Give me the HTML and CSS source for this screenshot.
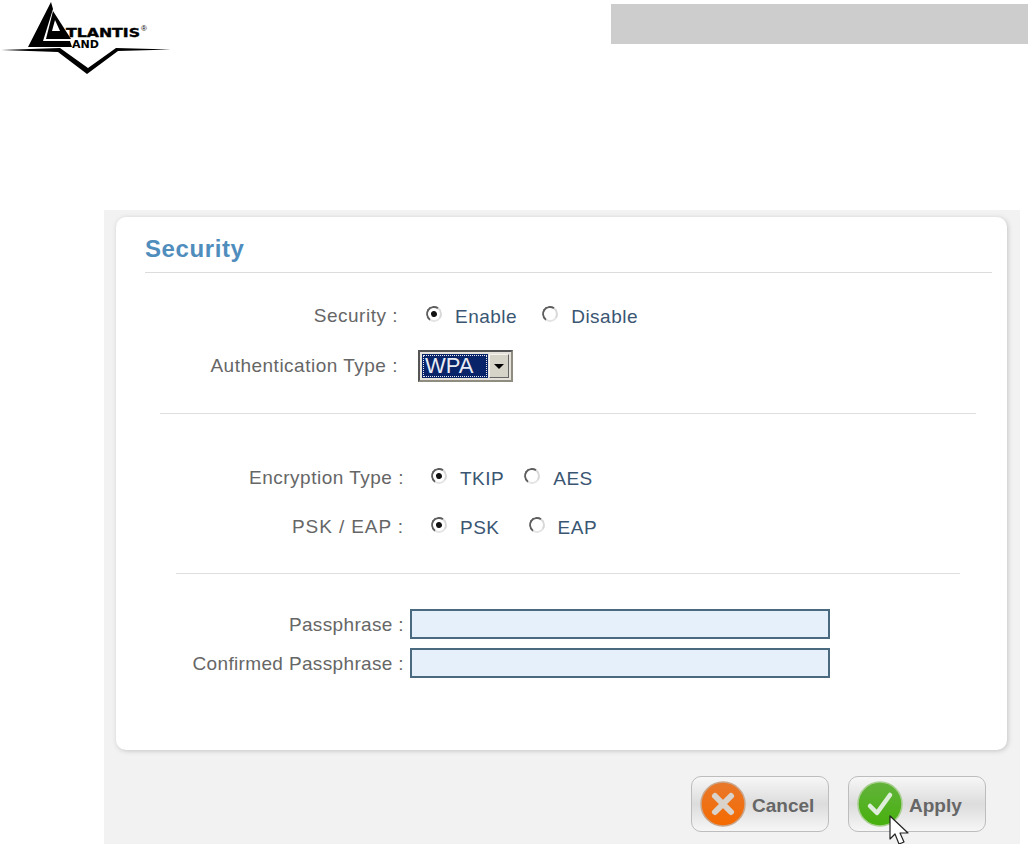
FILE: index.html
```html
<!DOCTYPE html>
<html>
<head>
	<meta charset="utf-8" />
	<title>Security</title>
	<link rel="stylesheet" href="styles.css">
</head>
<body>
	<div class="top">
		<svg class="logo" width="176" height="80" viewBox="0 0 176 80">
			<polygon points="1,50 60,48 88,68 116,48 171,49.500 118,51 87,74 58,52" fill="#000"/>
			<polygon points="28,47 51,2 53,9 43,41 70,41 72,47" fill="#000"/>
			<polygon points="46,39 53,11 71,39" fill="#000"/>
			<polygon points="52,31 60,31 55,20" fill="#fff"/>
			<text class="logo-main" x="66" y="37" textLength="74" lengthAdjust="spacingAndGlyphs">TLANTIS</text>
			<text class="logo-sub" x="72" y="48" textLength="27" lengthAdjust="spacingAndGlyphs">AND</text>
			<text class="logo-reg" x="141" y="31">®</text>
		</svg>
		<div class="top-bar"></div>
	</div>

	<div class="shot">
		<div class="card">
			<h1 class="title">Security</h1>

			<div class="row row-sec">
				<label class="name name-a">Security :</label>
				<span class="radio on"></span><span class="val val-enable">Enable</span>
				<span class="radio"></span><span class="val">Disable</span>
			</div>
			<div class="row row-auth">
				<label class="name name-auth">Authentication Type :</label>
				<div class="select">
					<div class="select-val"><span>WPA</span></div>
					<div class="select-btn"><i></i></div>
				</div>
			</div>

			<hr class="line line-a">

			<div class="row row-enc">
				<label class="name name-b">Encryption Type :</label>
				<span class="radio on"></span><span class="val val-tkip">TKIP</span>
				<span class="radio"></span><span class="val">AES</span>
			</div>
			<div class="row row-psk">
				<label class="name name-b name-psk">PSK / EAP :</label>
				<span class="radio on"></span><span class="val val-psk">PSK</span>
				<span class="radio"></span><span class="val">EAP</span>
			</div>

			<hr class="line line-b">

			<div class="row row-pass">
				<label class="name name-c">Passphrase :</label>
				<div class="field"></div>
			</div>
			<div class="row row-conf">
				<label class="name name-c">Confirmed Passphrase :</label>
				<div class="field"></div>
			</div>
		</div>

		<div class="actions">
			<div class="btn">
				<svg class="btn-icon" width="46" height="46" viewBox="0 0 46 46">
					<defs>
						<linearGradient id="org" x1="0" y1="0" x2="0" y2="1">
							<stop offset="0" stop-color="#e8782c"/>
							<stop offset="1" stop-color="#f56a00"/>
						</linearGradient>
					</defs>
					<circle cx="23" cy="23" r="22" fill="url(#org)" stroke="#c9a68c" stroke-width="1.500"/>
					<path d="M15 15 L31 31 M31 15 L15 31" stroke="#d9d3cc" stroke-width="6" stroke-linecap="round"/>
				</svg>
				<span>Cancel</span>
			</div>
			<div class="btn btn-apply">
				<svg class="btn-icon" width="46" height="46" viewBox="0 0 46 46">
					<defs>
						<linearGradient id="grn" x1="0" y1="0" x2="0" y2="1">
							<stop offset="0" stop-color="#63b33c"/>
							<stop offset="1" stop-color="#46b00c"/>
						</linearGradient>
					</defs>
					<circle cx="23" cy="23" r="22" fill="url(#grn)" stroke="#a8cf90" stroke-width="1.500"/>
					<path d="M13 25 L20 32 L33 14" fill="none" stroke="#dfeeda" stroke-width="4.500" stroke-linecap="round" stroke-linejoin="round"/>
				</svg>
				<span>Apply</span>
			</div>
		</div>

		<svg class="pointer" width="22" height="30" viewBox="0 0 22 30">
			<path d="M1 1 L1 24 L6 19 L10 29 L15 27 L11 18 L19 18 Z" fill="#fff" stroke="#222" stroke-width="1.200" stroke-linejoin="round"/>
		</svg>
	</div>
</body>
</html>
```

FILE: styles.css
```css
* { margin:0; padding:0; box-sizing:border-box; }
html, body { height:844px; overflow:hidden; background:#fff; }
body { font-family:"Liberation Sans", Arial, sans-serif; }

.top { display:flex; justify-content:space-between; height:210px; }
.logo { display:block; }
.logo-main { font-family:"DejaVu Sans", sans-serif; font-weight:bold; font-size:13px; fill:#000; stroke:#000; stroke-width:.4px; }
.logo-sub { font-family:"DejaVu Sans", sans-serif; font-weight:bold; font-size:10px; fill:#000; }
.logo-reg { font-size:8px; fill:#000; }
.top-bar { width:417px; height:40px; margin-top:4px; background:#cdcdcd; }

.shot { position:relative; width:916px; height:634px; margin-left:104px; padding:7px 13px 0 12px; background:#f2f2f2; overflow:hidden; }
.card { width:891px; height:533px; padding-top:1px; background:#fff; border-radius:10px; box-shadow:1px 1px 5px #c4c4c4; }

.title { height:55px; margin:0 15px 0 29px; padding-top:17px; border-bottom:1px solid #dcdcdc; color:#4f8dbd; font-size:24px; line-height:28px; font-weight:bold; letter-spacing:.6px; }

.row { display:flex; align-items:center; color:#666; font-size:19px; letter-spacing:.5px; }
.name { flex:none; text-align:right; white-space:nowrap; }
.name-a { width:282px; margin-right:28px; }
.name-auth { width:282px; margin-right:20px; }
.name-b { width:288px; margin-right:27px; }
.name-psk { letter-spacing:.9px; }
.name-c { width:288px; margin-right:6px; position:relative; top:1px; letter-spacing:.35px; }
.val { color:#3a5672; white-space:nowrap; position:relative; top:1px; }
.val-enable { margin-right:25px; }
.val-tkip { margin-right:20px; }
.val-psk { margin-right:29px; }

.row-sec { height:30px; margin-top:28px; }
.row-auth { height:32px; margin-top:19px; }
.row-enc { height:30px; margin-top:0; }
.row-psk { height:30px; margin-top:19px; }
.row-pass { height:30px; margin-top:0; }
.row-conf { height:30px; margin-top:9px; }

.line { border:0; height:1px; background:#dedede; }
.line-a { margin:31px 31px 49px 44px; }
.line-b { margin:31px 47px 35px 60px; }

.radio { flex:none; position:relative; top:-2px; width:16px; height:16px; margin-right:13px; border-radius:50%; background:#fff; border:2px solid; border-color:#5e5e5e #d8d8d8 #e4e4e4 #5e5e5e; transform:rotate(-10deg); }
.radio.on::after { content:""; position:absolute; left:3px; top:3px; width:6px; height:6px; border-radius:50%; background:#111; }

.select { display:flex; width:95px; height:32px; padding:2px; gap:1px; background:#e4e2da; border:2px solid; border-color:#555 #8f8d80 #8f8d80 #555; letter-spacing:0; }
.select-val { width:66px; background:#0a246a; color:#e8ecf4; padding:1px; font-size:22px; line-height:22px; }
.select-val span { display:block; height:100%; outline:1px dotted #e8e8e8; outline-offset:-1px; padding-left:2px; }
.select-btn { display:flex; align-items:center; justify-content:center; flex:1; background:#d6d3c9; border:1px solid; border-color:#f4f3ee #666 #666 #f4f3ee; }
.select-btn i { width:0; height:0; border-style:solid; border-width:5px 5px 0; border-color:#000 transparent transparent; }

.field { width:420px; height:30px; background:#e6f0fb; border:2px solid #4a6a80; }

.actions { display:flex; gap:19px; height:56px; margin:26px 0 0 575px; }
.btn { display:flex; align-items:center; width:138px; height:56px; padding:4px 0 0 8px; border:1px solid #bdbdbd; border-radius:10px; background:linear-gradient(#f7f7f7 0%, #dcdcdc 50%, #f6f6f6 100%); color:#666; font-size:19px; font-weight:bold; }
.btn-icon { flex:none; margin:-4px 6px 0 0; }

.pointer { position:absolute; left:785px; top:605px; }
```
